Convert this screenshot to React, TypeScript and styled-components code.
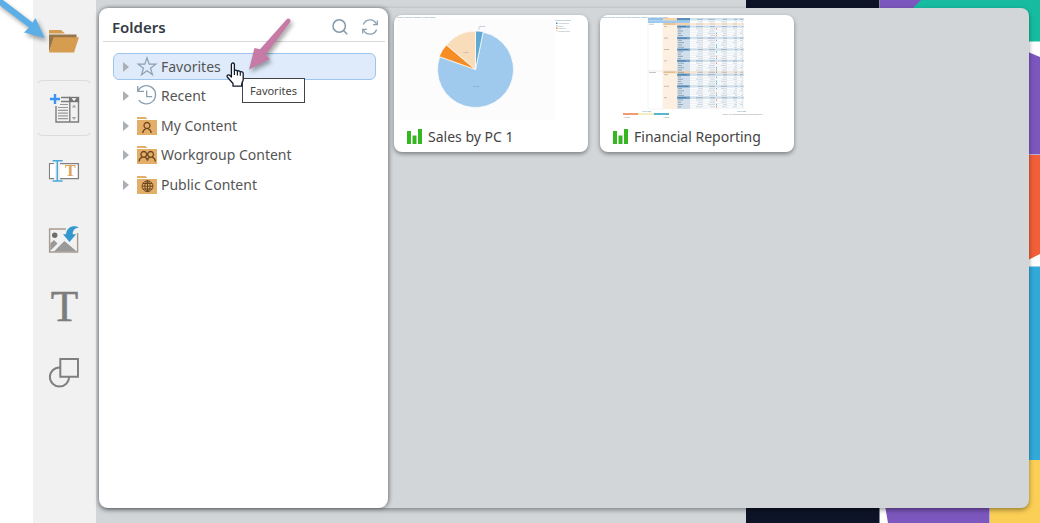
import React from "react";
import styled, { createGlobalStyle } from "styled-components";

const GlobalStyle = createGlobalStyle`
  *, *::before, *::after { box-sizing: border-box; }
  body {
    margin: 0;
    background: #fff;
    color: #555;
    font-family: "Noto Sans", "Open Sans", sans-serif;
    font-size: 14px;
  }
  button { font: inherit; color: inherit; background: none; border: 0; padding: 0; cursor: pointer; }
  svg { display: block; flex: none; overflow: visible; }
`;

const Page = styled.div`
  position: relative;
  display: flex;
  min-height: 100vh;
  padding-left: 33px;
  overflow: hidden;
`;

const Rail = styled.nav`
  flex: 0 0 63px;
  display: flex;
  flex-direction: column;
  gap: 10px;
  padding: 14px 3px 14px 2px;
  background: #f1f1f1;
`;

const RailButton = styled.button<{ $framed?: boolean }>`
  display: flex;
  align-items: center;
  justify-content: center;
  height: 56px;
  border: 1px solid ${(p) => (p.$framed ? "#dcdcdc" : "transparent")};
  border-left-color: transparent;
  border-right-color: transparent;
  border-radius: 8px;
`;

const Workspace = styled.main`
  position: relative;
  flex: 1;
  display: flex;
  padding: 8px 11px 15px 3px;
  background: #d2d6d9;
`;

const Artwork = styled.svg`
  position: absolute;
  top: 0;
  right: 0;
  background: #fff;
`;

const Panel = styled.section`
  position: relative;
  flex: 1;
  display: flex;
  border-radius: 8px;
  background: #d2d6d9;
  box-shadow: 0 2px 5px rgba(0, 0, 0, 0.4);
`;

const Sidebar = styled.aside`
  flex: 0 0 289px;
  padding: 5px 3px 8px 4px;
  border-radius: 9px;
  background: #fff;
  box-shadow: 1px 0 4px rgba(0, 0, 0, 0.45);
`;

const SidebarHeader = styled.header`
  display: flex;
  align-items: center;
  gap: 14px;
  height: 29px;
  padding: 0 7px 0 9px;
  border-bottom: 1px solid #d8d8d8;
`;

const Title = styled.h1`
  flex: 1;
  margin: 0;
  color: #333b47;
  font-size: 15px;
  font-weight: 600;
  line-height: 28px;
`;

const HeaderButton = styled.button`
  height: 26px;
  width: 16px;
`;

const Tree = styled.ul`
  display: flex;
  flex-direction: column;
  justify-content: space-between;
  height: 145px;
  margin: 11px 9px 0 10px;
  padding: 0;
  list-style: none;
`;

const TreeItem = styled.li`
  position: relative;
`;

const TreeButton = styled.button<{ $selected?: boolean }>`
  display: flex;
  align-items: center;
  width: 100%;
  height: 27px;
  padding: 0 8px;
  border: 1px solid ${(p) => (p.$selected ? "#9cc6f0" : "transparent")};
  border-radius: 6px;
  background: ${(p) => (p.$selected ? "#dfebfb" : "transparent")};
  line-height: 20px;
  text-align: left;
`;

const TreeIcon = styled.svg`
  margin: 0 4px 0 7px;
`;

const Tooltip = styled.span`
  position: absolute;
  top: 25px;
  left: 129px;
  z-index: 2;
  padding: 3px 7px;
  border: 1px solid #444;
  background: #fff;
  color: #444;
  font-size: 11px;
  line-height: 17px;
`;

const Pointer = styled.svg`
  position: absolute;
  top: 9px;
  left: 113px;
  z-index: 3;
  pointer-events: none;
`;

const Annotation = styled.svg`
  position: absolute;
  z-index: 4;
  pointer-events: none;
  filter: drop-shadow(2px 3px 2px rgba(0, 0, 0, 0.35));
`;

const PinkArrow = styled(Annotation)`
  top: -37px;
  left: 133px;
`;

const BlueArrow = styled(Annotation)`
  top: 0;
  left: 0;
`;

const Cards = styled.div`
  flex: 1;
  display: flex;
  flex-wrap: wrap;
  align-content: flex-start;
  gap: 12px;
  padding: 7px 6px;
`;

const Card = styled.button`
  display: flex;
  flex-direction: column;
  width: 194px;
  height: 137px;
  overflow: hidden;
  border-radius: 8px;
  background: #fff;
  box-shadow: 0 2px 4px rgba(0, 0, 0, 0.4);
`;

const CardLabel = styled.span`
  display: flex;
  align-items: center;
  gap: 5px;
  padding: 0 13px;
  color: #444;
  line-height: 22px;
`;

const thumbText = { fontFamily: "Open Sans, sans-serif", fontSize: 2 };

function FolderOpenIcon() {
  return (
    <svg width="32" height="32" viewBox="0 0 32 32" aria-hidden="true">
      <path d="M1 4h12l4 3.500H1z" fill="#d69d50" />
      <path d="M1 8.500h27.500V12H6L1 26z" fill="#94754c" />
      <path d="M5.600 11.200H31L26 26.500H1z" fill="#d69d50" />
    </svg>
  );
}

function ListBoxIcon() {
  return (
    <svg width="32" height="32" viewBox="0 0 32 32" aria-hidden="true">
      <path d="M13 5.500h9M13 9.500h8M8 14v16h22.500V9" fill="none" stroke="#7d7d7d" strokeWidth="1.400" />
      <path d="M21.800 5v25" stroke="#7d7d7d" strokeWidth="1.400" />
      <path d="M21 4.800h10.200v5.400H21z" fill="#757575" />
      <path d="M23.500 6.200h5L26 9z" fill="#fff" />
      <path d="M23.800 15.500h4.400L26 12.500zM23.800 25h4.400L26 28z" fill="#a5a5a5" />
      <path d="M12 12.500h8M10 15.500h10M10 18.300h10M10 21.100h10M10 23.900h10M10 26.700h10" stroke="#999" strokeWidth="1.200" />
      <path d="M7 2v10M2 7h10" stroke="#3c93f2" strokeWidth="2.400" />
    </svg>
  );
}

function TextBoxIcon() {
  return (
    <svg width="32" height="32" viewBox="0 0 32 32" aria-hidden="true">
      <path d="M6 5.600H1.600v15H6M12 5.600h18.400v15H12" fill="#fff" stroke="#808080" strokeWidth="1.300" />
      <path d="M2 6.300h5v13.600H2z" fill="#fff" />
      <path d="M9.300 3v20M4.600 2.800h10M4.600 23h10" stroke="#4aa9d8" strokeWidth="1.500" />
      <text x="17" y="18" fill="#dca359" fontFamily="Liberation Serif, serif" fontWeight="700" fontSize="16">T</text>
    </svg>
  );
}

function ImageIcon() {
  return (
    <svg width="32" height="32" viewBox="0 0 32 32" aria-hidden="true">
      <path d="M18 5H1.600v23h28V9" fill="none" stroke="#a69a8e" strokeWidth="1.400" />
      <circle cx="6.700" cy="11.300" r="2.700" fill="#6d6d6d" />
      <path d="M2.300 19.500 6 16l3.500 3.500L3 26l-.7.500zM6 27.400 16.400 17l12.400 10.400z" fill="#999" />
      <path d="M31 3.500c-5-2.800-12.300-1-13 6.800h-3l6.500 7.700 6.600-7.700h-3.400c0-4.200 2.200-6.300 6.300-6.800z" fill="#3497ce" />
    </svg>
  );
}

function TextIcon() {
  return (
    <svg width="32" height="32" viewBox="0 0 32 32" aria-hidden="true">
      <text x="16.500" y="31" textAnchor="middle" fill="#7d7d7d" stroke="#7d7d7d" strokeWidth="0.500" fontFamily="Liberation Serif, serif" fontSize="45">T</text>
    </svg>
  );
}

function ShapesIcon() {
  return (
    <svg width="32" height="32" viewBox="0 0 32 32" fill="#f1f1f1" stroke="#808080" strokeWidth="2" aria-hidden="true">
      <circle cx="11.500" cy="21" r="9.600" />
      <path d="M12.300 3h17.700v17.700H12.300z" />
    </svg>
  );
}

function SearchIcon() {
  return (
    <svg width="16" height="24" viewBox="0 0 16 24" fill="none" stroke="#8299ab" strokeWidth="1.500" aria-hidden="true">
      <circle cx="7.200" cy="11" r="6.200" />
      <path d="m11.500 15.500 3.700 3.700" />
    </svg>
  );
}

function RefreshIcon() {
  return (
    <svg width="16" height="24" viewBox="0 0 16 24" fill="none" stroke="#8b9fb0" strokeWidth="1.300" aria-hidden="true">
      <path d="M1.400 9.500A7 7 0 0 1 14.400 9M14.600 14.500A7 7 0 0 1 1.600 15" />
      <path d="M15.300 5.500v4.200h-4.200M.7 18.500v-4.200h4.200" />
    </svg>
  );
}

function Expander() {
  return (
    <svg width="8" height="10" viewBox="0 0 8 10" aria-hidden="true">
      <path d="M1 0v10l6-5z" fill="#abb0b4" />
    </svg>
  );
}

const PersonPath = "M10 6.500a3 3 0 1 0 .01 0zM5.800 17c.2-2.300 1-3.600 2.900-4.200M14.200 17c-.2-2.300-1-3.600-2.900-4.200";

function ContentFolder({ children }: { children: React.ReactNode }) {
  return (
    <TreeIcon width="20" height="20" viewBox="0 0 20 20" aria-hidden="true">
      <path d="M0 1h8.500l2 2H0zM0 4h20v15H0z" fill="#e3ae68" />
      <g fill="none" stroke="#6d4520" strokeWidth="1.300">{children}</g>
    </TreeIcon>
  );
}

const treeItems = [
  {
    label: "Favorites",
    icon: (
      <TreeIcon width="20" height="20" viewBox="0 0 20 20" fill="none" stroke="#8b9fb1" strokeWidth="1.200" aria-hidden="true">
        <path d="m10 .8 2.200 6.400h6.600l-5.300 4 2 6.500L10 13.800l-5.500 3.900 2-6.500-5.300-4h6.600z" />
      </TreeIcon>
    ),
  },
  {
    label: "Recent",
    icon: (
      <TreeIcon width="20" height="20" viewBox="0 0 20 20" fill="none" stroke="#8b9fb1" strokeWidth="1.300" aria-hidden="true">
        <path d="M1.200 4.500A9.200 9.200 0 1 1 1.800 14M.7 0v5.300H7M9.700 4.500v6.200h5.500" />
      </TreeIcon>
    ),
  },
  { label: "My Content", icon: <ContentFolder><path d={PersonPath} /></ContentFolder> },
  {
    label: "Workgroup Content",
    icon: (
      <ContentFolder>
        <path d="M6.800 6.500a2.900 2.900 0 1 0 .01 0zM13.600 6.500a2.900 2.900 0 1 0 .01 0zM2 16.500c.3-2.500 1.300-3.700 3.300-4.300M18.400 16.500c-.3-2.500-1.300-3.700-3.300-4.300M8 12.200c1.300.6 2.200 1.700 2.500 3.500.2-1.800.9-2.900 2-3.500" />
      </ContentFolder>
    ),
  },
  {
    label: "Public Content",
    icon: (
      <ContentFolder>
        <path d="M10.500 5.800a5.400 5.400 0 1 0 .01 0zM10.500 5.800v10.800M5.100 11.200h10.800M10.500 5.800c-3.600 2.700-3.600 8 0 10.800M10.500 5.800c3.600 2.700 3.600 8 0 10.800M6 8.500h9M6 14h9" strokeWidth="1" />
      </ContentFolder>
    ),
  },
];

function PieThumb() {
  return (
    <svg width="194" height="111" viewBox="0 0 194 111" aria-hidden="true">
      <path d="M3 4h157v101H3z" fill="#fcfcfc" />
      <text x="3" y="3" fill="#4b88a6" {...thumbText}>Sales by Product Category (United States)</text>
      <g stroke="#fcfcfc" strokeWidth="0.700">
        <path d="M81.500 54.500 89.200 17.300A38 38 0 1 1 45.700 41.800z" fill="#9fcaed" />
        <path d="M81.500 54.500V16a38 38 0 0 1 7.700.8z" fill="#5fa9d3" />
        <path d="M81.500 54.500 45.100 41.500A38 38 0 0 1 52.500 30z" fill="#f68d24" />
        <path d="M81.500 54.500 52.500 30A38 38 0 0 1 81.500 16z" fill="#f9dcb9" />
      </g>
      <path d="M85 15v-3l2-1" fill="none" stroke="#aaa" strokeWidth="0.500" />
      <g fill="#7879a8" {...thumbText}>
        <text x="86" y="12">2.78%</text>
        <text x="69" y="38">13.6%</text>
        <text x="60" y="46">6.12%</text>
        <text x="79" y="72">77.45%</text>
      </g>
      <g fill="#8b9aa6" {...thumbText}>
        <text x="161" y="6" fill="#4b88a6">Product Category</text>
        <text x="164" y="9">Accessories</text>
        <text x="164" y="12">Bikes</text>
        <text x="164" y="14">Clothing</text>
        <text x="164" y="17">Components</text>
      </g>
      <path d="M162 7.500h1.500v1.500H162z" fill="#3c91c6" />
      <path d="M162 10h1.500v1.500H162z" fill="#9fcaed" />
      <path d="M162 12.500h1.500V14H162z" fill="#f68d24" />
      <path d="M162 15h1.500v1.500H162z" fill="#f9dcb9" />
    </svg>
  );
}

const rowPitch = 2.28;
const groupTops = [10.4, 22, 33.4, 44.8, 58.6, 70.2, 81.6];
const detailCounts = [4, 4, 4, 5, 4, 4, 4];
const totalTops = [8, 56.2];
const valueColumns = [
  { right: 103, width: 7 },
  { right: 115, width: 7 },
  { right: 127, width: 6 },
  { right: 137, width: 4 },
  { right: 143, width: 3 },
];

function ValueLine({ y, seed, strong }: { y: number; seed: number; strong?: boolean }) {
  return (
    <g stroke="#7f95a8" strokeWidth="0.900" opacity={strong ? 0.65 : 0.38}>
      {valueColumns.map((c, i) => (
        <path key={c.right} d={`M${c.right} ${y}h-${c.width - ((seed + i * 2) % 3)}`} />
      ))}
    </g>
  );
}

function ReportThumb() {
  return (
    <svg width="194" height="111" viewBox="0 0 194 111" aria-hidden="true">
      <text x="2" y="3" fill="#4b88a6" {...thumbText}>Sales Territory and Time Period Summary Report by Region, with Totals</text>
      <path d="M48 3h15v91H48z" fill="#fff" stroke="#e5e8eb" strokeWidth="0.500" />
      <path d="M63 3h14v91H63z" fill="#fdf0e1" />
      <path d="M77 3h13v91H77z" fill="#d3e0ee" />
      <path d="M90 3h54v91H90z" fill="#fcfdfe" />
      <path d="M48 3h15v2.500H48z" fill="#8fc1ea" />
      <path d="M63 3h14v2.500H63z" fill="#f8d2a5" />
      <path d="M77 3h13v2.500H77z" fill="#5a8db8" />
      <path d="M90 3h54v2.500H90z" fill="#cfe3ec" />
      <ValueLine y={4.3} seed={1} strong />
      <path d="M48 5.500h42v2.500H48z" fill="#9ccaf0" />
      <ValueLine y={6.800} seed={2} />
      {totalTops.map((y, i) => (
        <g key={y}>
          <path d={`M63 ${y}h27v2H63z`} fill="#f8d2a5" />
          <path d={`M90 ${y}h54v2H90z`} fill="#fbe9d4" />
          <path d={`M64 ${y + 1}h11`} stroke="#a98a66" strokeWidth="0.700" opacity="0.600" />
          <ValueLine y={y + 1} seed={i} />
        </g>
      ))}
      {groupTops.map((top, g) => (
        <g key={top}>
          <path d={`M77 ${top}h13v2.300H77z`} fill="#74a1c8" />
          <path d={`M78 ${top + 1.1}h${8 + (g % 3)}`} stroke="#38658f" strokeWidth="0.800" opacity="0.700" />
          <path d={`M90 ${top}h54v2.300H90z`} fill="#d2e0ec" />
          <path d={`M64 ${top + 1.1}h${3 + (g % 3)}`} stroke="#94806a" strokeWidth="0.800" opacity="0.600" />
          <ValueLine y={top + 1.1} seed={g} strong />
          {Array.from({ length: detailCounts[g] }, (_, d) => {
            const y = top + rowPitch * (d + 1);
            const seed = g + d * 2;
            return (
              <g key={d}>
                <path d={`M78 ${y + 1.1}h${3 + (seed % 4)}`} stroke="#5b7188" strokeWidth="0.800" opacity="0.650" />
                <ValueLine y={y + 1.1} seed={seed} />
                <path d={`M77 ${y + rowPitch}h67`} stroke="#c5d2dd" strokeWidth="0.300" />
                {d !== 1 && <path d={`M116 ${y + 0.4}h1v1.400h-1z`} fill={seed % 3 ? "#5bb8cf" : "#ee8d6b"} />}
              </g>
            );
          })}
        </g>
      ))}
      <path d="M48 56h29" stroke="#ccc" strokeWidth="0.400" />
      <path d="M49 57.500h7M49 9.200h5" stroke="#777" strokeWidth="0.700" opacity="0.600" />
      <path d="M23 98h15v2H23z" fill="#f19a73" />
      <path d="M38 98h16v2H38z" fill="#f7edc3" />
      <path d="M54 98h15v2H54z" fill="#57b5cd" />
      <g fill="#4b88a6" {...thumbText}>
        <text x="42" y="97">Net Profit</text>
        <text x="137" y="97">Net Profit</text>
      </g>
      <g fill="#777" {...thumbText}>
        <text x="23" y="103">-10,000</text>
        <text x="63" y="103">10,000</text>
        <text x="122" y="100">Minus Avg Maximum Sum in the group only</text>
      </g>
    </svg>
  );
}

function ReportIcon() {
  return (
    <svg width="16" height="16" viewBox="0 0 16 16" fill="#36b620" aria-hidden="true">
      <path d="M0 2h4v13H0zM5.500 6.500h4V15h-4zM11 0h4v15h-4z" />
    </svg>
  );
}

const railItems = [
  { label: "Folders", icon: <FolderOpenIcon /> },
  { label: "Add list", icon: <ListBoxIcon />, framed: true },
  { label: "Add text field", icon: <TextBoxIcon /> },
  { label: "Add image", icon: <ImageIcon /> },
  { label: "Add text", icon: <TextIcon /> },
  { label: "Add shape", icon: <ShapesIcon /> },
];

export default function App() {
  return (
    <>
      <GlobalStyle />
      <Page>
        <Rail aria-label="Tools">
          {railItems.map((item) => (
            <RailButton key={item.label} type="button" aria-label={item.label} $framed={item.framed}>
              {item.icon}
            </RailButton>
          ))}
        </Rail>
        <Workspace>
          <Artwork width="294" height="100%" viewBox="0 0 294 523" preserveAspectRatio="xMaxYMin slice" aria-hidden="true">
            <path d="M0 0h133.500v523H0z" fill="#0e1428" />
            <path d="M134 0h42l-16 16h-26z" fill="#7c57be" />
            <path d="M175 0h119v41.500H160V15z" fill="#17bca0" />
            <path d="M270 47 294 57v97.500h-24z" fill="#7c57be" />
            <path d="M270 155h24v99l-24 12z" fill="#f15f38" />
            <path d="M270 266.500h24V460h-24z" fill="#31a9d9" />
            <path d="M244 460h50v63h-50z" fill="#fbcf55" />
            <path d="M138 500h105.500v23H142z" fill="#7c57be" />
          </Artwork>
          <Panel>
            <Sidebar>
              <SidebarHeader>
                <Title>Folders</Title>
                <HeaderButton type="button" aria-label="Search"><SearchIcon /></HeaderButton>
                <HeaderButton type="button" aria-label="Refresh"><RefreshIcon /></HeaderButton>
              </SidebarHeader>
              <Tree>
                {treeItems.map((item, i) => (
                  <TreeItem key={item.label}>
                    <TreeButton type="button" $selected={i === 0}>
                      <Expander />
                      {item.icon}
                      {item.label}
                    </TreeButton>
                    {i === 0 && (
                      <>
                        <Tooltip role="tooltip">Favorites</Tooltip>
                        <Pointer width="19" height="25" viewBox="0 0 19 25" aria-hidden="true">
                          <path
                            d="M7 24.200v-2.700L1.300 15c-.9-1.200.6-2.700 2-1.900L5.400 15V2.500c0-2 3-2 3 0V9c.3-1.200 2.700-1.100 3 .4.400-1 2.500-.8 2.900.7.500-.8 2.900-.5 2.900 1.200v6.200c0 2-1.500 2.800-1.500 4.800v1.900z"
                            fill="#fff"
                            stroke="#111a2b"
                            strokeWidth="1.300"
                            strokeLinejoin="round"
                          />
                          <path d="M8.400 9v4M11.400 9.400v4M14.300 10.200v3.500" stroke="#111a2b" strokeWidth="1.200" />
                        </Pointer>
                        <PinkArrow width="46" height="56" viewBox="0 0 46 56" aria-hidden="true">
                          <path d="M40.500 3.500c1.500-2.200 5-.2 3.800 2.400L19.500 39l4.500 4-21 10.500L8.500 32l5.500 1.200z" fill="#c67aa6" />
                        </PinkArrow>
                      </>
                    )}
                  </TreeItem>
                ))}
              </Tree>
            </Sidebar>
            <Cards>
              <Card type="button">
                <PieThumb />
                <CardLabel><ReportIcon />Sales by PC 1</CardLabel>
              </Card>
              <Card type="button">
                <ReportThumb />
                <CardLabel><ReportIcon />Financial Reporting</CardLabel>
              </Card>
            </Cards>
          </Panel>
        </Workspace>
        <BlueArrow width="46" height="40" viewBox="0 0 46 40" aria-hidden="true">
          <path d="M-2-1 3 0l29.500 22.500 3-4.500 9.200 20L24 32.500l5-5L-2 4z" fill="#5cafe6" />
        </BlueArrow>
      </Page>
    </>
  );
}
